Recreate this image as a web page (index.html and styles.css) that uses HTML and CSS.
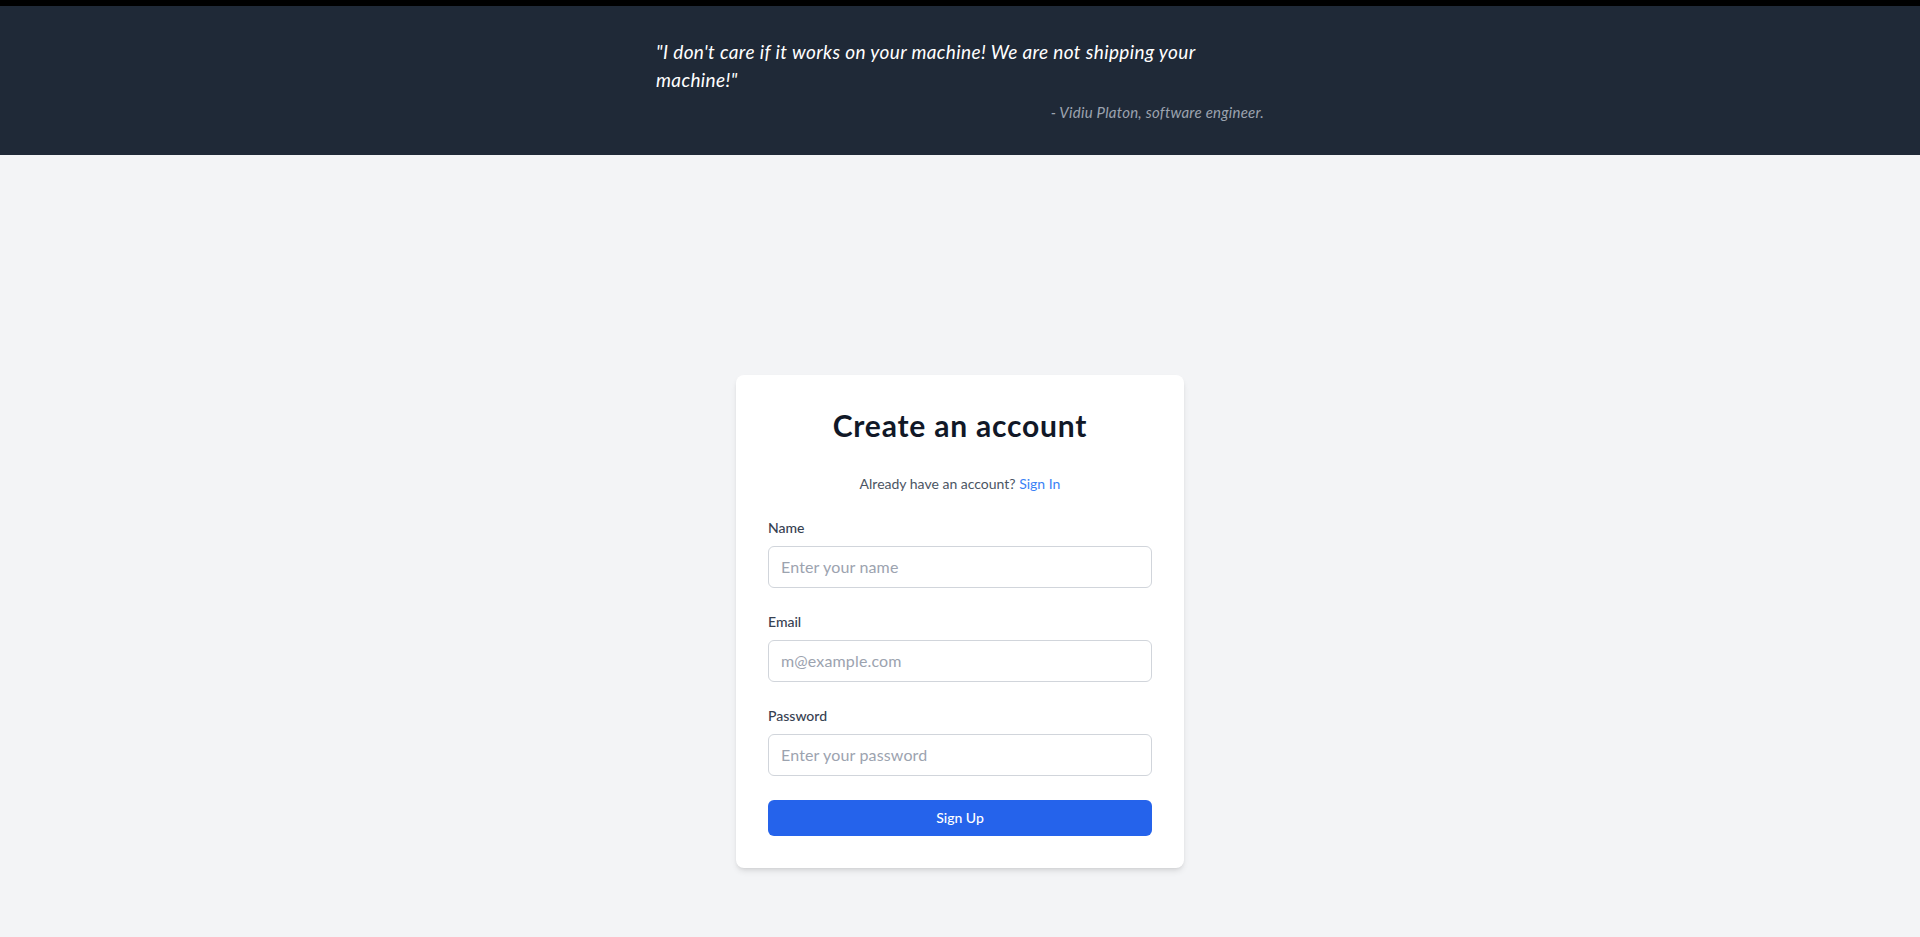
FILE: index.html
```html
<!DOCTYPE html>
<html lang="en">
<head>
<meta charset="utf-8">
<title>Create an account</title>
<link rel="stylesheet" href="styles.css">
</head>
<body>
  <div class="topstrip"></div>
  <header class="quote-bar">
    <figure class="quote">
      <blockquote class="quote-text">"I don't care if it works on your machine! We are not shipping your<br>machine!"</blockquote>
      <figcaption class="quote-author">- Vidiu Platon, software engineer.</figcaption>
    </figure>
  </header>
  <main class="main">
    <form class="card">
      <h1 class="card-title">Create an account</h1>
      <p class="card-sub">Already have an account? <a class="link" href="#">Sign In</a></p>
      <div class="field">
        <label class="label" for="name">Name</label>
        <input class="input" id="name" type="text" placeholder="Enter your name">
      </div>
      <div class="field">
        <label class="label" for="email">Email</label>
        <input class="input" id="email" type="email" placeholder="m@example.com">
      </div>
      <div class="field">
        <label class="label" for="password">Password</label>
        <input class="input" id="password" type="password" placeholder="Enter your password">
      </div>
      <button class="btn" type="button">Sign Up</button>
    </form>
  </main>
</body>
</html>
```

FILE: styles.css
```css
* { box-sizing: border-box; }
html, body { margin: 0; padding: 0; }
body {
  font-family: "Lato", "Noto Sans", sans-serif;
  background: #f3f4f6;
  color: #111827;
}
.topstrip {
  height: 6px;
  background: #000;
}
.quote-bar {
  background: #1f2937;
  height: 149px;
  padding-top: 32px;
}
.quote {
  max-width: 672px;
  margin: 0 auto;
  padding: 0 32px;
}
.quote-text {
  margin: 0;
  font-style: italic;
  font-size: 19px;
  letter-spacing: 0.37px;
  line-height: 28px;
  color: #ffffff;
}
.quote-author {
  margin-top: 8px;
  text-align: right;
  font-style: italic;
  font-size: 15px;
  letter-spacing: 0.25px;
  line-height: 20px;
  color: #9ca3af;
}
.main {
  min-height: 100vh;
  padding-bottom: 5px;
  display: flex;
  align-items: center;
  justify-content: center;
}
.card {
  width: 448px;
  background: #fff;
  border-radius: 8px;
  box-shadow: 0 4px 6px -1px rgba(0,0,0,0.1), 0 2px 4px -2px rgba(0,0,0,0.1);
  padding: 32px;
  display: flex;
  flex-direction: column;
}
.card-title {
  margin: 0 0 31px;
  text-align: center;
  font-size: 30px;
  letter-spacing: 0.8px;
  line-height: 36px;
  font-weight: 700;
  color: #111827;
}
.card-sub {
  margin: 0 0 24px;
  text-align: center;
  font-size: 14px;
  line-height: 20px;
  color: #4b5563;
}
.link { color: #3b82f6; text-decoration: none; }
.field {
  display: flex;
  flex-direction: column;
  gap: 8px;
  margin-bottom: 24px;
}
.label {
  font-size: 14px;
  line-height: 20px;
  font-weight: 500;
  color: #374151;
}
.input {
  height: 42px;
  border: 1px solid #d1d5db;
  border-radius: 6px;
  padding: 8px 12px;
  font-family: inherit;
  font-size: 16px;
  letter-spacing: 0.15px;
  color: #111827;
  background: #fff;
  outline: none;
}
.input::placeholder { color: #9ca3af; }
.btn {
  height: 36px;
  border: 0;
  border-radius: 6px;
  background: #2563eb;
  color: #fff;
  font-family: inherit;
  font-size: 14px;
  font-weight: 500;
  cursor: pointer;
}
```
